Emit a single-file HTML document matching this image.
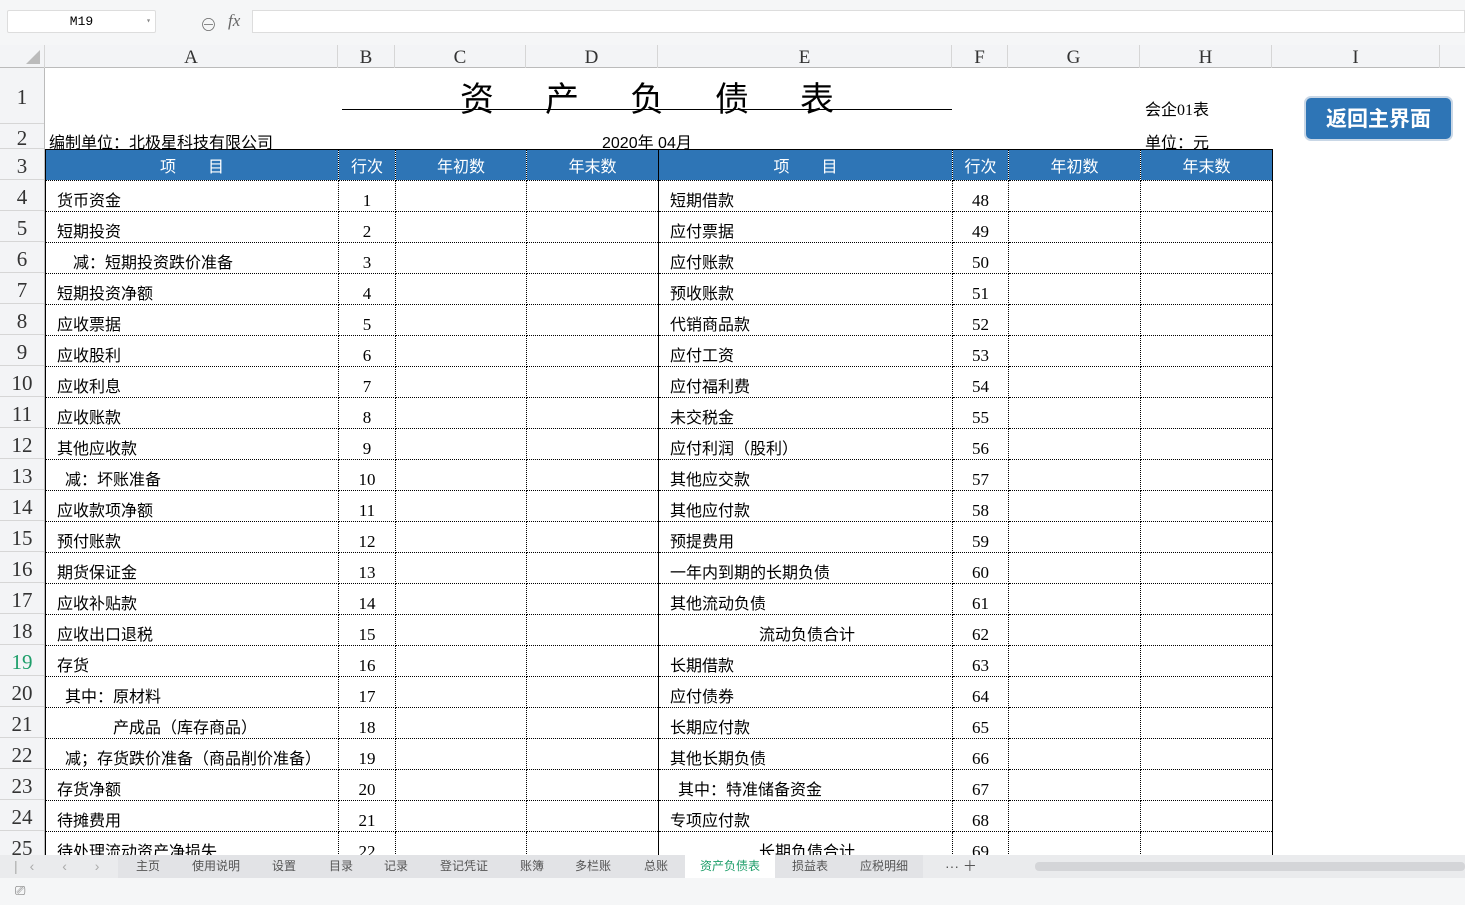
<!DOCTYPE html>
<html><head><meta charset="utf-8"><style>
*{box-sizing:border-box;margin:0;padding:0}
body{width:1465px;height:905px;overflow:hidden;background:#fff;font-family:"Liberation Serif","Noto Serif CJK SC","Noto Sans CJK SC",serif;position:relative}
.abs{position:absolute}
#top{left:0;top:0;width:1465px;height:45px;background:#f5f6f7}
#namebox{left:7px;top:10px;width:149px;height:23px;background:#fff;border:1px solid #ddd;border-radius:2px;font:13px "Liberation Mono",monospace;text-align:center;line-height:21px}
#fbar{left:252px;top:10px;width:1213px;height:23px;background:#fff;border:1px solid #ddd}
#colhdr{left:0;top:45px;width:1465px;height:23px;background:#f3f4f6;border-bottom:1px solid #bbb}
.ch{position:absolute;top:0;height:23px;line-height:26px;text-align:center;font-size:19px;color:#333;border-right:1px solid #d6d6d6}
#rowhdr{left:0;top:68px;width:45px;height:787px;background:#f3f4f6;border-right:1px solid #bbb}
.rh{position:absolute;left:0;width:44px;text-align:center;font-size:21px;color:#333;border-bottom:1px solid #d6d6d6}
table{position:absolute;left:45px;top:149px;border-collapse:collapse;table-layout:fixed;border:1px solid #000}
td{height:31px;border:1px dotted #000;font-size:16px;font-family:"Liberation Sans","Noto Sans CJK SC",sans-serif;white-space:nowrap;overflow:hidden;padding:6px 0 0 11px;vertical-align:middle}
td.n{text-align:center;padding:9px 0 0 0;font-family:"Liberation Serif",serif;font-size:17px}
tr.h td{background:#2e75b6;color:#fff;text-align:center;padding:0;border-bottom:1px dotted #000;border-top:1px solid #000}
td.mid{border-right:1px solid #000}
#tabs{left:0;top:855px;width:1465px;height:23px;background:#eaebed;font:12px "Liberation Sans","Noto Sans CJK SC",sans-serif;color:#555}
.tb{position:absolute;top:0;height:23px;line-height:23px}
#status{left:0;top:878px;width:1465px;height:27px;background:#f5f6f7}
</style></head><body>
<div id="top" class="abs"></div>
<div id="namebox" class="abs">M19<span style="position:absolute;right:4px;font-size:8px;color:#888">▾</span></div>
<div class="abs" style="left:200px;top:11px;font-size:17px;color:#666">⊖</div>
<div class="abs" style="left:228px;top:11px;font:italic 17px 'Liberation Serif',serif;color:#666">fx</div>
<div id="fbar" class="abs"></div>
<div id="colhdr" class="abs">
<div class="ch" style="left:0;width:45px"><div style="position:absolute;right:4px;bottom:4px;width:0;height:0;border-left:14px solid transparent;border-bottom:14px solid #bbb"></div></div>
<div class="ch" style="left:45px;width:293px">A</div>
<div class="ch" style="left:338px;width:57px">B</div>
<div class="ch" style="left:395px;width:131px">C</div>
<div class="ch" style="left:526px;width:132px">D</div>
<div class="ch" style="left:658px;width:294px">E</div>
<div class="ch" style="left:952px;width:56px">F</div>
<div class="ch" style="left:1008px;width:132px">G</div>
<div class="ch" style="left:1140px;width:132px">H</div>
<div class="ch" style="left:1272px;width:168px">I</div>
</div>
<div id="rowhdr" class="abs">
<div class="rh" style="top:0;height:56px;line-height:58px">1</div>
<div class="rh" style="top:56px;height:25px;line-height:28px">2</div>
<div class="rh" style="top:81px;height:31px;line-height:34px">3</div>
<div class="rh" style="top:112px;height:31px;line-height:34px">4</div>
<div class="rh" style="top:143px;height:31px;line-height:34px">5</div>
<div class="rh" style="top:174px;height:31px;line-height:34px">6</div>
<div class="rh" style="top:205px;height:31px;line-height:34px">7</div>
<div class="rh" style="top:236px;height:31px;line-height:34px">8</div>
<div class="rh" style="top:267px;height:31px;line-height:34px">9</div>
<div class="rh" style="top:298px;height:31px;line-height:34px">10</div>
<div class="rh" style="top:329px;height:31px;line-height:34px">11</div>
<div class="rh" style="top:360px;height:31px;line-height:34px">12</div>
<div class="rh" style="top:391px;height:31px;line-height:34px">13</div>
<div class="rh" style="top:422px;height:31px;line-height:34px">14</div>
<div class="rh" style="top:453px;height:31px;line-height:34px">15</div>
<div class="rh" style="top:484px;height:31px;line-height:34px">16</div>
<div class="rh" style="top:515px;height:31px;line-height:34px">17</div>
<div class="rh" style="top:546px;height:31px;line-height:34px">18</div>
<div class="rh" style="top:577px;height:31px;line-height:34px;color:#1e9e6a">19</div>
<div class="rh" style="top:608px;height:31px;line-height:34px">20</div>
<div class="rh" style="top:639px;height:31px;line-height:34px">21</div>
<div class="rh" style="top:670px;height:31px;line-height:34px">22</div>
<div class="rh" style="top:701px;height:31px;line-height:34px">23</div>
<div class="rh" style="top:732px;height:31px;line-height:34px">24</div>
<div class="rh" style="top:763px;height:31px;line-height:34px">25</div>
</div>
<div class="abs" style="left:460px;top:72px;font:34px 'Noto Sans CJK SC',sans-serif;letter-spacing:51px;white-space:nowrap">资产负债表</div>
<div class="abs" style="left:342px;top:109px;width:610px;height:1px;background:#000"></div>
<div class="abs" style="left:49px;top:129px;font:16px 'Liberation Sans','Noto Sans CJK SC',sans-serif">编制单位：北极星科技有限公司</div>
<div class="abs" style="left:602px;top:129px;font:16px 'Liberation Sans','Noto Sans CJK SC',sans-serif">2020年 04月</div>
<div class="abs" style="left:1145px;top:96px;font:16px 'Liberation Serif','Noto Sans CJK SC',serif">会企01表</div>
<div class="abs" style="left:1145px;top:129px;font:16px 'Liberation Sans','Noto Sans CJK SC',sans-serif">单位：元</div>
<div class="abs" style="left:1304px;top:96px;width:149px;height:45px;background:#2e75b6;border:2px solid #c9d7e6;border-radius:7px;color:#fff;font:bold 21px 'Noto Sans CJK SC',sans-serif;text-align:center;line-height:40px">返回主界面</div>
<table>
<colgroup><col style="width:293px"><col style="width:57px"><col style="width:131px"><col style="width:132px"><col style="width:294px"><col style="width:56px"><col style="width:132px"><col style="width:132px"></colgroup>
<tr class="h"><td>项&emsp;&emsp;目</td><td>行次</td><td>年初数</td><td class="mid">年末数</td><td>项&emsp;&emsp;目</td><td>行次</td><td>年初数</td><td>年末数</td></tr>
<tr><td>货币资金</td><td class="n">1</td><td></td><td class="mid"></td><td>短期借款</td><td class="n">48</td><td></td><td></td></tr>
<tr><td>短期投资</td><td class="n">2</td><td></td><td class="mid"></td><td>应付票据</td><td class="n">49</td><td></td><td></td></tr>
<tr><td>&emsp;减：短期投资跌价准备</td><td class="n">3</td><td></td><td class="mid"></td><td>应付账款</td><td class="n">50</td><td></td><td></td></tr>
<tr><td>短期投资净额</td><td class="n">4</td><td></td><td class="mid"></td><td>预收账款</td><td class="n">51</td><td></td><td></td></tr>
<tr><td>应收票据</td><td class="n">5</td><td></td><td class="mid"></td><td>代销商品款</td><td class="n">52</td><td></td><td></td></tr>
<tr><td>应收股利</td><td class="n">6</td><td></td><td class="mid"></td><td>应付工资</td><td class="n">53</td><td></td><td></td></tr>
<tr><td>应收利息</td><td class="n">7</td><td></td><td class="mid"></td><td>应付福利费</td><td class="n">54</td><td></td><td></td></tr>
<tr><td>应收账款</td><td class="n">8</td><td></td><td class="mid"></td><td>未交税金</td><td class="n">55</td><td></td><td></td></tr>
<tr><td>其他应收款</td><td class="n">9</td><td></td><td class="mid"></td><td>应付利润（股利）</td><td class="n">56</td><td></td><td></td></tr>
<tr><td>&ensp;减：坏账准备</td><td class="n">10</td><td></td><td class="mid"></td><td>其他应交款</td><td class="n">57</td><td></td><td></td></tr>
<tr><td>应收款项净额</td><td class="n">11</td><td></td><td class="mid"></td><td>其他应付款</td><td class="n">58</td><td></td><td></td></tr>
<tr><td>预付账款</td><td class="n">12</td><td></td><td class="mid"></td><td>预提费用</td><td class="n">59</td><td></td><td></td></tr>
<tr><td>期货保证金</td><td class="n">13</td><td></td><td class="mid"></td><td>一年内到期的长期负债</td><td class="n">60</td><td></td><td></td></tr>
<tr><td>应收补贴款</td><td class="n">14</td><td></td><td class="mid"></td><td>其他流动负债</td><td class="n">61</td><td></td><td></td></tr>
<tr><td>应收出口退税</td><td class="n">15</td><td></td><td class="mid"></td><td style="padding-left:100px">流动负债合计</td><td class="n">62</td><td></td><td></td></tr>
<tr><td>存货</td><td class="n">16</td><td></td><td class="mid"></td><td>长期借款</td><td class="n">63</td><td></td><td></td></tr>
<tr><td>&ensp;其中：原材料</td><td class="n">17</td><td></td><td class="mid"></td><td>应付债券</td><td class="n">64</td><td></td><td></td></tr>
<tr><td style="padding-left:67px">产成品（库存商品）</td><td class="n">18</td><td></td><td class="mid"></td><td>长期应付款</td><td class="n">65</td><td></td><td></td></tr>
<tr><td>&ensp;减；存货跌价准备（商品削价准备）</td><td class="n">19</td><td></td><td class="mid"></td><td>其他长期负债</td><td class="n">66</td><td></td><td></td></tr>
<tr><td>存货净额</td><td class="n">20</td><td></td><td class="mid"></td><td>&ensp;其中：特准储备资金</td><td class="n">67</td><td></td><td></td></tr>
<tr><td>待摊费用</td><td class="n">21</td><td></td><td class="mid"></td><td>专项应付款</td><td class="n">68</td><td></td><td></td></tr>
<tr><td>待处理流动资产净损失</td><td class="n">22</td><td></td><td class="mid"></td><td style="padding-left:100px">长期负债合计</td><td class="n">69</td><td></td><td></td></tr>
</table>
<div id="tabs" class="abs">
<span class="tb" style="left:14px;color:#aaa;font-size:14px;letter-spacing:12px">|‹ ‹ › ›|</span>
<div class="tb" style="left:118px;width:805px;background:#e2e3e6"></div>
<span class="tb" style="left:136px">主页</span>
<span class="tb" style="left:192px">使用说明</span>
<span class="tb" style="left:272px">设置</span>
<span class="tb" style="left:329px">目录</span>
<span class="tb" style="left:384px">记录</span>
<span class="tb" style="left:440px">登记凭证</span>
<span class="tb" style="left:520px">账簿</span>
<span class="tb" style="left:575px">多栏账</span>
<span class="tb" style="left:644px">总账</span>
<div class="tb" style="left:685px;width:90px;background:#fff;color:#1e9e6a;text-align:center">资产负债表</div>
<span class="tb" style="left:792px">损益表</span>
<span class="tb" style="left:860px">应税明细</span>
<span class="tb" style="left:945px;font-size:14px">··· ＋</span>
<div class="tb" style="left:1035px;top:7px;width:430px;height:9px;background:#d4d5d8;border-radius:4px"></div>
</div>
<div id="status" class="abs"><span class="abs" style="left:15px;top:5px;font-size:13px;color:#666">⎚</span></div>
</body></html>
